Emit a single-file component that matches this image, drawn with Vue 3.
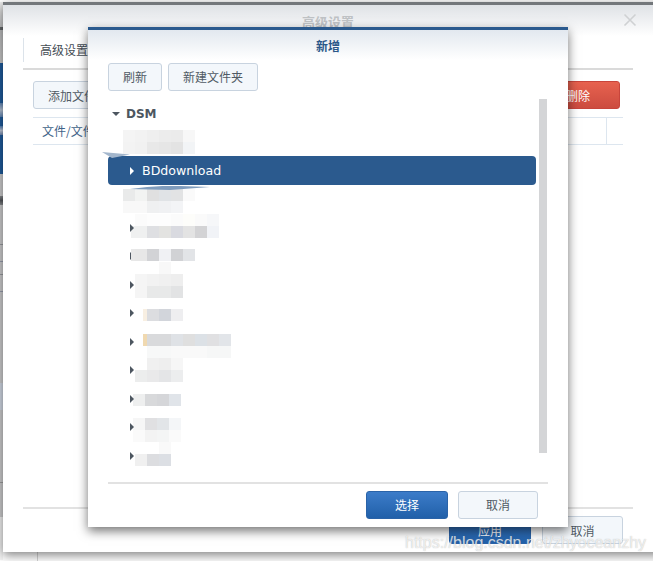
<script setup>
const names = [
  { label: 'DSM', open: true },
  { arrow: false, mosaic: { x: 15, y: -12, rows: [['#f4f4f4','#f2f2f2','#efefef','#ececec','#ebebeb','#f7f7f7'],['#f3f3f3','#f1f1f1','#e8e8e8','#e6e6e6','#e3e3e3','#f2f4f6']] } },
  { label: 'BDdownload', selected: true },
  { arrow: false, mosaic: { x: 15, y: -10, rows: [['#e9eaea','#f2f3f2','#e0e0e0','#e0e3e6','#e2e3e4','#fafafa'],['#f8f8f8','#f8f8f8','#eff0f1','#f0f1f3','#f3f4f6','#ffffff']] } },
  { mosaic: { x: 23, y: -14, first: 4, rows: [['#ffffff','#fbfbfb','#fdfdfd','#fdfdfd','#fbfbfb','#fdfdfa','#fafafa','#f6f7f9'],['#eff0f0','#eff0f0','#dedfe2','#e3e3e1','#d9dae0','#e3e3e3','#d3d3d5','#f1f3f7']] } },
  { cover: true, mosaic: { x: 23, y: -7, first: 4, rows: [['#e8e8e8','#e7e7e7','#d2d3d6','#f0f1f4','#d1d2d5','#e2e4e7']] } },
  { mosaic: { x: 27, y: -23, rows: [['#ffffff','#ffffff','#f8f8f8','#ffffff'],['#f5f5f5','#f2f2f2','#f0f0f0','#eeeeee'],['#f5f5f5','#e8e9e9','#e8e9e9','#e2e3e4']] } },
  { mosaic: { x: 35, y: -4, first: 4, rows: [['#f8efe2','#dcdde0','#d2d5db','#eeeef0']] } },
  { mosaic: { x: 35, y: -8, first: 4, rows: [['#f0d9b0','#d9dadc','#d9dadc','#dfe2e6','#dfdfdf','#dce1e6','#e0e0e2','#e2e5e9'],['#ffffff','#f7f8f8','#f7f8f8','#f9f9f9','#f9f9f9','#f9f9f9','#f6f7f7','#f6f7f7']] } },
  { mosaic: { x: 27, y: -12, rows: [['#ffffff','#f0f0f0','#eeeeee','#f6f6f6'],['#eceded','#e9e9ea','#e4e5e7','#ecedee']] } },
  { mosaic: { x: 25, y: -5, rows: [['#eeefef','#d8d9db','#d5d6d9','#e0e4e9']] } },
  { mosaic: { x: 25, y: -9, rows: [['#f6f6f6','#e0e0e2','#e2e5e8','#f4f6f8'],['#fafafa','#f3f3f3','#f4f5f5','#fafafa']] } },
  { mosaic: { x: 27, y: -14, rows: [['#ffffff','#ffffff','#f9f9f9'],['#f0f0f0','#dcdde0','#dcdfe4']] } }
]

const sideBands = [
  { h: 2, c: '#ffffff' },
  { h: 25, c: 'linear-gradient(#ececec,#c6c7c8)' },
  { h: 3, c: '#66696c' },
  { h: 33, c: 'linear-gradient(#bcbdbe,#cbcbcb)' },
  { h: 40, c: '#1f5c9e' },
  { h: 14, c: 'linear-gradient(#5f86b6,#b9c6d8 50%,#5f86b6)' },
  { h: 9, c: '#1f5c9e' },
  { h: 9, c: 'linear-gradient(#4f80b8,#c3cbdc 50%,#6f88b0)' },
  { h: 39, c: '#1f5c9e' },
  { h: 22, c: '#cfcfd0' },
  { h: 9, c: 'linear-gradient(#8a8d90,#55585c 50%,#8a8d90)' },
  { h: 39, c: '#cfcfd0' },
  { h: 1, c: '#9a9ca0' },
  { h: 16, c: '#cfcfd0' },
  { h: 1, c: '#9a9fb0' },
  { h: 12, c: '#cfcfd0' },
  { h: 1, c: '#9a9ca0' },
  { h: 16, c: '#cfcfd0' },
  { h: 1, c: '#9a9fb0' },
  { h: 91, c: '#cfcfd0' },
  { h: 27, c: '#d3dae6' },
  { h: 72, c: '#cfcfd0' },
  { h: 1, c: '#a0a0a0' },
  { h: 34, c: '#cfcfd0' },
  { h: 43, c: '#f4f4f4' }
]

function cellStyle(color, ci, m) {
  return {
    background: color,
    width: ci === 0 && m.first ? m.first + 'px' : undefined
  }
}
function mosaicStyle(m) {
  return { left: m.x + 'px', top: `calc(50% + ${m.y}px)` }
}
</script>

<template>
  <div class="desk">
    <div class="side">
      <div v-for="(b, i) in sideBands" :key="i" :style="{ height: b.h + 'px', background: b.c }"></div>
    </div>
    <span class="under-line"></span>

    <section class="win outer">
      <header class="outer-head">
        <span class="outer-title">高级设置</span>
        <svg class="close" width="14" height="14" viewBox="0 0 14 14"><path d="M1.5 1.5 12.5 12.5M12.5 1.5 1.5 12.5" stroke="#cfd1d3" stroke-width="1.6" fill="none"/></svg>
      </header>
      <div class="tabs"><span class="tab">高级设置</span></div>
      <div class="tools">
        <button class="btn add">添加文件</button>
        <button class="btn danger">删除</button>
      </div>
      <div class="thead"><span class="th-main">文件/文件夹</span><span class="th-end"></span></div>
      <div class="spring"></div>
      <footer class="outer-foot">
        <button class="btn primary">应用</button>
        <button class="btn plain">取消</button>
      </footer>
    </section>

    <section class="win inner">
      <header class="inner-head">新增</header>
      <div class="inner-tools">
        <button class="btn refresh">刷新</button>
        <button class="btn newdir">新建文件夹</button>
      </div>
      <div class="tree-wrap">
        <ul class="tree">
          <li v-for="(n, i) in names" :key="i" class="node" :class="{ sel: n.selected, root: n.open }">
            <span v-if="n.open" class="caret-down"></span>
            <span v-else-if="n.arrow !== false" class="caret-right" :class="{ covered: n.cover }"></span>
            <span v-if="n.label" class="label">{{ n.label }}</span>
            <span v-if="n.mosaic" class="mosaic" :style="mosaicStyle(n.mosaic)">
              <span v-for="(r, ri) in n.mosaic.rows" :key="ri" class="m-row">
                <span v-for="(c, ci) in r" :key="ci" class="m-cell" :style="cellStyle(c, ci, n.mosaic)"></span>
              </span>
            </span>
          </li>
        </ul>
        <div class="scroll"></div>
        <svg class="sliver s1" width="30" height="6" viewBox="0 0 30 6"><path d="M0 0 28 2.5 10 6Z" fill="#a3b6cc"/></svg>
        <svg class="sliver s2" width="80" height="4" viewBox="0 0 80 4"><path d="M0 3Q30-1 50 0L80 1 40 4Z" fill="#7f9cbd"/></svg>
      </div>
      <footer class="inner-foot">
        <button class="btn primary pick">选择</button>
        <button class="btn plain">取消</button>
      </footer>
    </section>

    <span class="mark">https://blog.csdn.net/zhyoceanzhy</span>
  </div>
</template>

<style scoped>
.desk {
  position: relative;
  width: 653px;
  height: 561px;
  overflow: hidden;
  background: #ffffff;
  font-family: "Noto Sans CJK SC", "Noto Sans", sans-serif;
  font-size: 12px;
  color: #505a64;
}
.side {
  position: absolute;
  left: 0;
  top: 0;
  width: 3px;
}
.under-line {
  position: absolute;
  left: 37px;
  top: 550px;
  width: 1px;
  height: 11px;
  background: #d4d4d4;
}
.win {
  position: absolute;
  display: flex;
  flex-direction: column;
  background: #ffffff;
  box-sizing: border-box;
}
.outer {
  left: 3px;
  top: 2px;
  width: 680px;
  height: 550px;
  border-top: 3px solid #73777b;
  box-shadow: 0 3px 10px rgba(0, 0, 0, 0.5);
}
.outer-head {
  position: relative;
  height: 31px;
  flex: none;
  display: flex;
  align-items: center;
  background: linear-gradient(#dfe2e6, #ffffff);
}
.outer-title {
  margin-left: 299px;
  margin-top: 2px;
  font-weight: 700;
  font-size: 13px;
  color: #bfc2c5;
}
.close {
  position: absolute;
  left: 620px;
  top: 8px;
}
.tabs {
  margin: 0 0 0 20px;
  width: 610px;
  height: 32px;
  flex: none;
  border-bottom: 2px solid #dadada;
  box-sizing: content-box;
}
.tab {
  display: block;
  width: 64px;
  height: 24px;
  margin-top: 2px;
  line-height: 24px;
  padding-left: 16px;
  border-left: 1px solid #dce3ea;
  color: #454d55;
}
.tools {
  display: flex;
  justify-content: space-between;
  margin: 11px 0 0 30px;
  width: 587px;
}
.btn {
  box-sizing: border-box;
  height: 28px;
  padding: 0;
  border: 1px solid #c8d3df;
  border-radius: 3px;
  background: #f3f7fb;
  font: inherit;
  color: #505a64;
}
.add {
  width: 120px;
  text-align: left;
  padding-left: 14px;
}
.danger {
  width: 84px;
  border-color: #c8453c;
  background: linear-gradient(#e7624f, #cc4c40);
  color: #ffffff;
}
.thead {
  display: flex;
  margin: 8px 0 0 30px;
  width: 590px;
  height: 28px;
  box-sizing: border-box;
  border-top: 1px solid #dde6ef;
  border-bottom: 1px solid #dde6ef;
}
.th-main {
  flex: 1;
  padding-left: 9px;
  line-height: 26px;
  color: #3f6388;
}
.th-end {
  width: 16px;
  border-left: 1px solid #dde6ef;
}
.spring {
  flex: 1;
}
.outer-foot {
  display: flex;
  justify-content: flex-end;
  gap: 11px;
  margin-left: 20px;
  width: 610px;
  height: 45px;
  box-sizing: border-box;
  padding: 7px 10px 0 0;
  border-top: 2px solid #e2e2e2;
}
.primary {
  width: 82px;
  border-color: #2a63a8;
  background: linear-gradient(#3c7cc9, #2160a9);
  color: #ffffff;
}
.plain {
  width: 81px;
  background: #f3f7fb;
}
.inner {
  left: 88px;
  top: 27px;
  width: 480px;
  height: 500px;
  border-top: 3px solid #2b5a8e;
  box-shadow: 0 4px 10px rgba(0, 0, 0, 0.55);
}
.inner .btn {
  padding-bottom: 2px;
}
.inner-head {
  height: 30px;
  flex: none;
  text-align: center;
  line-height: 32px;
  font-weight: 700;
  color: #2a5788;
  background: linear-gradient(#e2e8ef, #ffffff);
}
.inner-tools {
  display: flex;
  gap: 6px;
  padding: 3px 0 0 20px;
}
.refresh {
  width: 54px;
}
.newdir {
  width: 90px;
}
.tree-wrap {
  position: relative;
  flex: 1;
  display: flex;
  margin: 8px 0 0 20px;
}
.tree {
  list-style: none;
  margin: 0;
  padding: 0;
  width: 428px;
}
.node {
  position: relative;
  height: 28.5px;
  display: flex;
  align-items: center;
  padding-left: 22px;
  box-sizing: border-box;
}
.root {
  padding-left: 4px;
  padding-top: 2px;
  font-family: "DejaVu Sans", sans-serif;
  font-weight: 700;
  color: #4d5660;
}
.caret-down {
  width: 0;
  height: 0;
  margin-right: 6px;
  border-left: 4px solid transparent;
  border-right: 4px solid transparent;
  border-top: 4px solid #4d5660;
}
.caret-right {
  position: relative;
  z-index: 1;
  width: 0;
  height: 0;
  border-top: 4.5px solid transparent;
  border-bottom: 4.5px solid transparent;
  border-left: 4.5px solid #4d5660;
}
.covered {
  z-index: 0;
}
.label {
  font-family: "DejaVu Sans", sans-serif;
}
.sel {
  height: 29px;
  border-radius: 4px;
  background: #2b5a8e;
  color: #ffffff;
}
.sel .caret-right {
  border-left-color: #ffffff;
  margin-right: 8px;
}
.sel .label {
  font-size: 12.6px;
}
.mosaic {
  position: absolute;
  display: flex;
  flex-direction: column;
}
.m-row {
  display: flex;
}
.m-cell {
  width: 12px;
  height: 12px;
}
.scroll {
  width: 8px;
  height: 354px;
  margin-left: 3px;
  background: #d4d5d7;
}
.sliver {
  position: absolute;
}
.s1 {
  left: -6px;
  top: 53px;
}
.s2 {
  left: 22px;
  top: 87px;
}
.inner-foot {
  display: flex;
  justify-content: flex-end;
  gap: 10px;
  margin-left: 20px;
  width: 440px;
  height: 45px;
  flex: none;
  box-sizing: border-box;
  padding: 7px 10px 0 0;
  border-top: 2px solid #e2e2e2;
}
.pick {
  width: 82px;
}
.inner-foot .plain {
  width: 80px;
}
.mark {
  position: absolute;
  left: 405px;
  top: 534px;
  font-family: "Liberation Sans", sans-serif;
  font-size: 16px;
  line-height: 18px;
  color: rgba(255, 255, 255, 0.72);
  text-shadow: 0 0 1px rgba(120, 120, 120, 0.55);
  white-space: nowrap;
}
</style>
